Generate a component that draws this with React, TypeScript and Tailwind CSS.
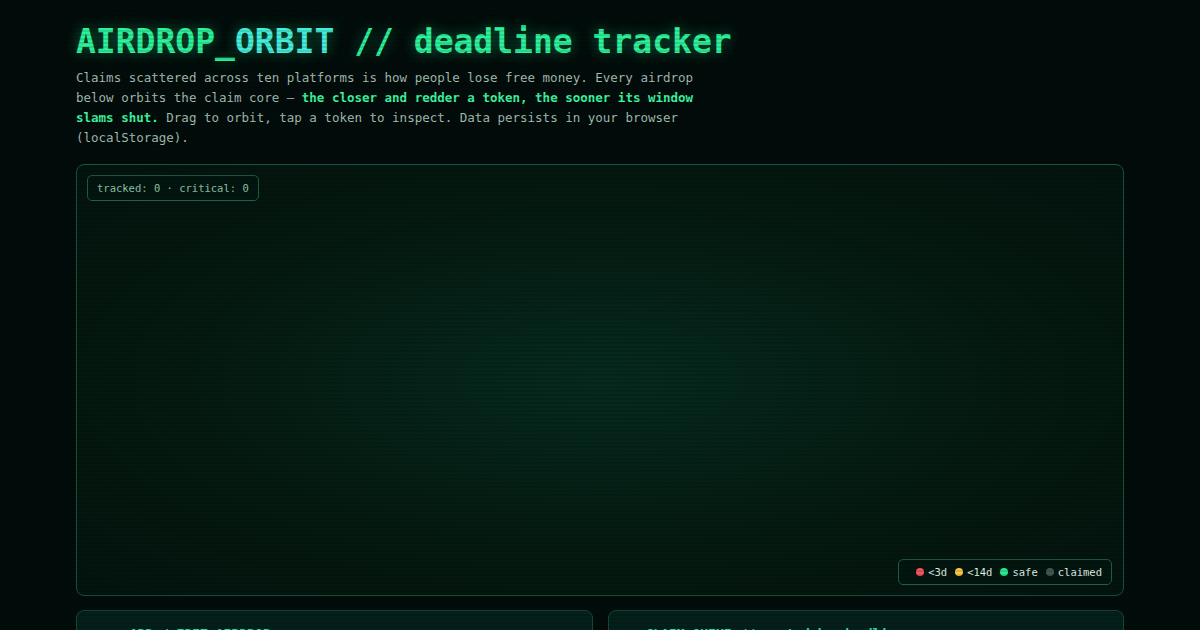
const mono = 'font-["DejaVu_Sans_Mono","Liberation_Mono",monospace]'

function LegendItem({ color, label }: { color: string; label: string }) {
  return (
    <span className="flex items-center gap-[4px]">
      <span className={`h-[8px] w-[8px] rounded-full ${color}`} />
      <span>{label}</span>
    </span>
  )
}

function OrbitStage() {
  return (
    <div className="relative mt-[16px] h-[432px] rounded-lg border border-[#17553e] bg-[radial-gradient(ellipse_at_center,#062a1f_0%,#04190f_60%,#03130e_100%)]">
      {/* stats badge */}
      <div className="absolute left-[10px] top-[10px] rounded-[5px] border border-[#1d6047] bg-[#03150f]/70 px-[9px] py-[5px] text-[10.5px] leading-[14px] text-[#92c9b0]">
        tracked: 0 · critical: 0
      </div>
      {/* legend */}
      <div className="absolute bottom-[10px] right-[11px] flex items-center gap-[8px] rounded-[5px] border border-[#1d6047] bg-[#03150f]/70 py-[5px] pl-[17px] pr-[9px] text-[10.5px] leading-[14px] text-[#e0f3ea]">
        <LegendItem color="bg-[#f5535f]" label="<3d" />
        <LegendItem color="bg-[#f7c843]" label="<14d" />
        <LegendItem color="bg-[#25ec94]" label="safe" />
        <LegendItem color="bg-[#40594f]" label="claimed" />
      </div>
    </div>
  )
}

function Panel({ title }: { title: string }) {
  return (
    <div className="h-[200px] rounded-lg border border-[#124c38] bg-[#03201a] px-[37px] pt-[13px]">
      <div className="text-[13px] font-bold leading-[20px] text-[#2bd6a5]">{title}</div>
    </div>
  )
}

export default function App() {
  return (
    <div className={`relative h-[630px] overflow-hidden bg-[#020c0a] ${mono}`}>
      <div className="mx-auto w-[1048px] pt-[22px]">
        <h1 className="text-[33px] font-bold leading-[40px] text-[#2cf29c] [text-shadow:0_0_14px_rgba(40,240,150,0.45)]">
          AIRDROP_<span className="text-[#45eedb]">ORBIT</span> // deadline tracker
        </h1>
        <p className="mt-[6px] max-w-[640px] text-[12.5px] leading-[20px] text-[#a3bdb0]">
          Claims scattered across ten platforms is how people lose free money. Every airdrop below orbits the claim core —{' '}
          <b className="font-bold text-[#3cf7a2]">the closer and redder a token, the sooner its window slams shut.</b> Drag to
          orbit, tap a token to inspect. Data persists in your browser (localStorage).
        </p>

        <OrbitStage />

        <div className="mt-[14px] grid grid-cols-2 gap-[15px]">
          <Panel title="+ ADD / EDIT AIRDROP" />
          <Panel title="CLAIM_QUEUE // sorted by deadline" />
        </div>
      </div>

      {/* CRT scanlines over everything */}
      <div className="pointer-events-none absolute inset-0 bg-[repeating-linear-gradient(to_bottom,rgba(0,0,0,0)_0px,rgba(0,0,0,0)_2px,rgba(0,0,0,0.12)_2px,rgba(0,0,0,0.12)_4px)]" />
    </div>
  )
}
